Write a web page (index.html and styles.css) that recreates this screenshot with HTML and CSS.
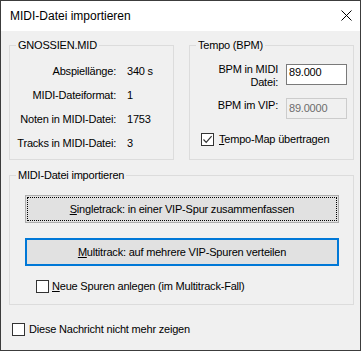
FILE: index.html
```html
<!DOCTYPE html>
<html lang="de">
<head>
<meta charset="utf-8">
<title>MIDI-Datei importieren</title>
<link rel="stylesheet" href="styles.css">
</head>
<body>
<div class="window">
  <div class="titlebar">
    <span class="title">MIDI-Datei importieren</span>
    <svg class="close" width="11" height="11" viewBox="0 0 11 11"><path d="M0.5 0.5 L10.5 10.5 M10.5 0.5 L0.5 10.5" stroke="#000" stroke-width="1" fill="none"/></svg>
  </div>
  <div class="client">
    <div class="top-row">
      <fieldset class="group g-file">
        <legend>GNOSSIEN.MID</legend>
        <div class="info-grid">
          <span class="lbl">Abspiellänge:</span><span class="val">340 s</span>
          <span class="lbl">MIDI-Dateiformat:</span><span class="val">1</span>
          <span class="lbl">Noten in MIDI-Datei:</span><span class="val">1753</span>
          <span class="lbl">Tracks in MIDI-Datei:</span><span class="val">3</span>
        </div>
      </fieldset>
      <fieldset class="group g-tempo">
        <legend>Tempo (BPM)</legend>
        <div class="tempo-row">
          <span class="tlbl">BPM in MIDI<br>Datei:</span>
          <div class="edit">89.000</div>
        </div>
        <div class="tempo-row row2">
          <span class="tlbl">BPM im VIP:</span>
          <div class="edit disabled">89.0000</div>
        </div>
        <label class="check tempo-check">
          <span class="box"><svg width="11" height="11" viewBox="0 0 11 11"><path d="M1.5 5.5 L4.2 8.3 L9.6 2.2" stroke="#333" stroke-width="1.2" fill="none"/></svg></span>
          <span class="ctext"><u>T</u>empo-Map übertragen</span>
        </label>
      </fieldset>
    </div>
    <fieldset class="group g-import">
      <legend>MIDI-Datei importieren</legend>
      <button class="btn focused"><span class="focus-ring"><u>S</u>ingletrack: in einer VIP-Spur zusammenfassen</span></button>
      <button class="btn default"><u>M</u>ultitrack: auf mehrere VIP-Spuren verteilen</button>
      <label class="check new-tracks">
        <span class="box"></span>
        <span class="ctext"><u>N</u>eue Spuren anlegen (im Multitrack-Fall)</span>
      </label>
    </fieldset>
    <label class="check dont-show">
      <span class="box"></span>
      <span class="ctext">Diese Nachricht nicht mehr zeigen</span>
    </label>
  </div>
</div>
</body>
</html>
```

FILE: styles.css
```css
html, body {
  margin: 0;
  padding: 0;
  background: #f0f0f0;
}

body {
  font-family: "Liberation Sans", Arial, sans-serif;
  font-size: 11px;
  line-height: 13px;
  color: #000;
}

.window {
  width: 361px;
  height: 351px;
  box-sizing: border-box;
  border: 1px solid #3c3c3c;
  background: #f0f0f0;
  display: flex;
  flex-direction: column;
  overflow: hidden;
}

.titlebar {
  height: 30px;
  flex: none;
  background: #ffffff;
  display: flex;
  align-items: flex-start;
  padding: 0 8px 0 9px;
}

.title {
  font-size: 12px;
  line-height: 14px;
  margin-top: 8px;
}

.close {
  margin-left: auto;
  margin-top: 9px;
  display: block;
}

.client {
  flex: 1;
  padding: 8px 6px 0 8px;
  display: flex;
  flex-direction: column;
  letter-spacing: -0.2px;
}

.top-row {
  display: flex;
  gap: 15px;
}

.group {
  margin: 0;
  padding: 0;
  border: 1px solid #dcdcdc;
  box-sizing: border-box;
  min-width: 0;
}

.group legend {
  padding: 0 2px;
  margin-left: 6px;
  line-height: 13px;
  font-size: 11px;
}

.g-file,
.g-tempo {
  width: 165px;
  height: 121px;
}

.g-import {
  width: 345px;
  height: 136px;
  margin-top: 9px;
}

.info-grid {
  display: grid;
  grid-template-columns: 106px auto;
  column-gap: 11px;
  row-gap: 11px;
  padding-top: 13px;
}

.lbl {
  text-align: right;
  white-space: nowrap;
}

.tempo-row {
  display: flex;
  align-items: flex-start;
  gap: 8px;
  margin-top: 11px;
}

.tempo-row.row2 {
  margin-top: 9px;
}

.tlbl {
  width: 88px;
  text-align: right;
  white-space: nowrap;
}

.row2 .tlbl {
  margin-top: 1px;
}

.edit {
  width: 61px;
  height: 21px;
  box-sizing: border-box;
  border: 1px solid #7a7a7a;
  background: #fff;
  padding: 1px 2px 0;
  margin-top: 1px;
  line-height: 13px;
}

.edit.disabled {
  margin-top: 0;
  padding-top: 3px;
  border-color: #cccccc;
  background: #f0f0f0;
  color: #6d6d6d;
}

.check {
  display: flex;
  align-items: flex-start;
}

.box {
  width: 13px;
  height: 13px;
  box-sizing: border-box;
  border: 1px solid #333;
  background: #fff;
  flex: none;
  display: flex;
}

.box svg {
  display: block;
}

.ctext {
  white-space: nowrap;
  margin-left: 4px;
}

.tempo-check {
  margin: 14px 0 0 11px;
}

.tempo-check .ctext {
  margin-left: 5px;
}

.btn {
  display: block;
  width: 314px;
  height: 28px;
  box-sizing: border-box;
  margin: 0 0 0 15px;
  padding: 1px;
  background: #e1e1e1;
  border: 1px solid #adadad;
  font: inherit;
  letter-spacing: inherit;
  line-height: 13px;
  color: #000;
}

.btn.focused {
  margin-top: 13px;
}

.focus-ring {
  display: flex;
  align-items: center;
  justify-content: center;
  height: 100%;
  box-sizing: border-box;
  border: 1px dotted #000;
}

.btn.default {
  margin-top: 15px;
  padding: 0;
  border: 2px solid #0078d7;
}

.new-tracks {
  margin: 14px 0 0 26px;
}

.new-tracks .ctext {
  margin-left: 3px;
}

.dont-show {
  margin: 18px 0 0 3px;
}
```
